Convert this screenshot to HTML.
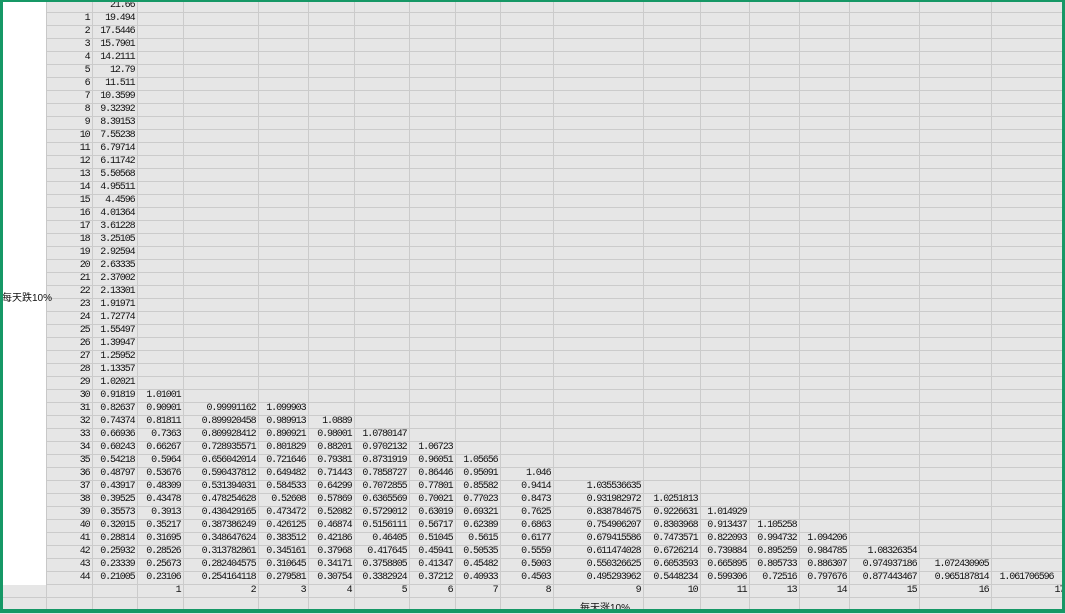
<!DOCTYPE html>
<html><head><meta charset="utf-8">
<style>
html,body{margin:0;padding:0;width:1065px;height:613px;overflow:hidden;background:#e6e6e6;}
table{position:absolute;left:0;top:0;border-collapse:collapse;table-layout:fixed;width:1080px;}
td{height:12px;padding:0 2px 0 0;border-right:1px solid #cbcbcb;border-bottom:1px solid #cbcbcb;text-align:right;white-space:nowrap;overflow:hidden;
font-family:"Liberation Mono","Noto Sans CJK SC",monospace;font-size:10px;letter-spacing:-1.1px;line-height:12px;color:#111;vertical-align:bottom;background:#e6e6e6;}
td.w{background:#fff;border-right:1px solid #c8c8c8;border-bottom:none;}
#frame{position:absolute;left:0;top:0;width:1065px;height:613px;box-sizing:border-box;border:2px solid #169866;border-left-width:3px;border-right-width:3px;border-bottom-width:4px;pointer-events:none;}
.lab{position:absolute;font-family:"Liberation Sans","Noto Sans CJK SC",sans-serif;font-size:10px;color:#111;white-space:nowrap;}
</style></head><body>
<table>
<colgroup><col style="width:46px"><col style="width:46px"><col style="width:45px"><col style="width:46px"><col style="width:75px"><col style="width:50px"><col style="width:46px"><col style="width:55px"><col style="width:46px"><col style="width:45px"><col style="width:53px"><col style="width:90px"><col style="width:57px"><col style="width:49px"><col style="width:50px"><col style="width:50px"><col style="width:70px"><col style="width:72px"><col style="width:89px"></colgroup>
<tr><td class="w"><td><td>21.66<td><td><td><td><td><td><td><td><td><td><td><td><td><td><td><td></tr>
<tr><td class="w"><td>1<td>19.494<td><td><td><td><td><td><td><td><td><td><td><td><td><td><td><td></tr>
<tr><td class="w"><td>2<td>17.5446<td><td><td><td><td><td><td><td><td><td><td><td><td><td><td><td></tr>
<tr><td class="w"><td>3<td>15.7901<td><td><td><td><td><td><td><td><td><td><td><td><td><td><td><td></tr>
<tr><td class="w"><td>4<td>14.2111<td><td><td><td><td><td><td><td><td><td><td><td><td><td><td><td></tr>
<tr><td class="w"><td>5<td>12.79<td><td><td><td><td><td><td><td><td><td><td><td><td><td><td><td></tr>
<tr><td class="w"><td>6<td>11.511<td><td><td><td><td><td><td><td><td><td><td><td><td><td><td><td></tr>
<tr><td class="w"><td>7<td>10.3599<td><td><td><td><td><td><td><td><td><td><td><td><td><td><td><td></tr>
<tr><td class="w"><td>8<td>9.32392<td><td><td><td><td><td><td><td><td><td><td><td><td><td><td><td></tr>
<tr><td class="w"><td>9<td>8.39153<td><td><td><td><td><td><td><td><td><td><td><td><td><td><td><td></tr>
<tr><td class="w"><td>10<td>7.55238<td><td><td><td><td><td><td><td><td><td><td><td><td><td><td><td></tr>
<tr><td class="w"><td>11<td>6.79714<td><td><td><td><td><td><td><td><td><td><td><td><td><td><td><td></tr>
<tr><td class="w"><td>12<td>6.11742<td><td><td><td><td><td><td><td><td><td><td><td><td><td><td><td></tr>
<tr><td class="w"><td>13<td>5.50568<td><td><td><td><td><td><td><td><td><td><td><td><td><td><td><td></tr>
<tr><td class="w"><td>14<td>4.95511<td><td><td><td><td><td><td><td><td><td><td><td><td><td><td><td></tr>
<tr><td class="w"><td>15<td>4.4596<td><td><td><td><td><td><td><td><td><td><td><td><td><td><td><td></tr>
<tr><td class="w"><td>16<td>4.01364<td><td><td><td><td><td><td><td><td><td><td><td><td><td><td><td></tr>
<tr><td class="w"><td>17<td>3.61228<td><td><td><td><td><td><td><td><td><td><td><td><td><td><td><td></tr>
<tr><td class="w"><td>18<td>3.25105<td><td><td><td><td><td><td><td><td><td><td><td><td><td><td><td></tr>
<tr><td class="w"><td>19<td>2.92594<td><td><td><td><td><td><td><td><td><td><td><td><td><td><td><td></tr>
<tr><td class="w"><td>20<td>2.63335<td><td><td><td><td><td><td><td><td><td><td><td><td><td><td><td></tr>
<tr><td class="w"><td>21<td>2.37002<td><td><td><td><td><td><td><td><td><td><td><td><td><td><td><td></tr>
<tr><td class="w"><td>22<td>2.13301<td><td><td><td><td><td><td><td><td><td><td><td><td><td><td><td></tr>
<tr><td class="w"><td>23<td>1.91971<td><td><td><td><td><td><td><td><td><td><td><td><td><td><td><td></tr>
<tr><td class="w"><td>24<td>1.72774<td><td><td><td><td><td><td><td><td><td><td><td><td><td><td><td></tr>
<tr><td class="w"><td>25<td>1.55497<td><td><td><td><td><td><td><td><td><td><td><td><td><td><td><td></tr>
<tr><td class="w"><td>26<td>1.39947<td><td><td><td><td><td><td><td><td><td><td><td><td><td><td><td></tr>
<tr><td class="w"><td>27<td>1.25952<td><td><td><td><td><td><td><td><td><td><td><td><td><td><td><td></tr>
<tr><td class="w"><td>28<td>1.13357<td><td><td><td><td><td><td><td><td><td><td><td><td><td><td><td></tr>
<tr><td class="w"><td>29<td>1.02021<td><td><td><td><td><td><td><td><td><td><td><td><td><td><td><td></tr>
<tr><td class="w"><td>30<td>0.91819<td>1.01001<td><td><td><td><td><td><td><td><td><td><td><td><td><td><td></tr>
<tr><td class="w"><td>31<td>0.82637<td>0.90901<td>0.99991162<td>1.099903<td><td><td><td><td><td><td><td><td><td><td><td><td></tr>
<tr><td class="w"><td>32<td>0.74374<td>0.81811<td>0.899920458<td>0.989913<td>1.0889<td><td><td><td><td><td><td><td><td><td><td><td></tr>
<tr><td class="w"><td>33<td>0.66936<td>0.7363<td>0.809928412<td>0.890921<td>0.98001<td>1.0780147<td><td><td><td><td><td><td><td><td><td><td></tr>
<tr><td class="w"><td>34<td>0.60243<td>0.66267<td>0.728935571<td>0.801829<td>0.88201<td>0.9702132<td>1.06723<td><td><td><td><td><td><td><td><td><td></tr>
<tr><td class="w"><td>35<td>0.54218<td>0.5964<td>0.656042014<td>0.721646<td>0.79381<td>0.8731919<td>0.96051<td>1.05656<td><td><td><td><td><td><td><td><td></tr>
<tr><td class="w"><td>36<td>0.48797<td>0.53676<td>0.590437812<td>0.649482<td>0.71443<td>0.7858727<td>0.86446<td>0.95091<td>1.046<td><td><td><td><td><td><td><td></tr>
<tr><td class="w"><td>37<td>0.43917<td>0.48309<td>0.531394031<td>0.584533<td>0.64299<td>0.7072855<td>0.77801<td>0.85582<td>0.9414<td>1.035536635<td><td><td><td><td><td><td></tr>
<tr><td class="w"><td>38<td>0.39525<td>0.43478<td>0.478254628<td>0.52608<td>0.57869<td>0.6365569<td>0.70021<td>0.77023<td>0.8473<td>0.931982972<td>1.0251813<td><td><td><td><td><td></tr>
<tr><td class="w"><td>39<td>0.35573<td>0.3913<td>0.430429165<td>0.473472<td>0.52082<td>0.5729012<td>0.63019<td>0.69321<td>0.7625<td>0.838784675<td>0.9226631<td>1.014929<td><td><td><td><td></tr>
<tr><td class="w"><td>40<td>0.32015<td>0.35217<td>0.387386249<td>0.426125<td>0.46874<td>0.5156111<td>0.56717<td>0.62389<td>0.6863<td>0.754906207<td>0.8303968<td>0.913437<td>1.105258<td><td><td><td></tr>
<tr><td class="w"><td>41<td>0.28814<td>0.31695<td>0.348647624<td>0.383512<td>0.42186<td>0.46405<td>0.51045<td>0.5615<td>0.6177<td>0.679415586<td>0.7473571<td>0.822093<td>0.994732<td>1.094206<td><td><td></tr>
<tr><td class="w"><td>42<td>0.25932<td>0.28526<td>0.313782861<td>0.345161<td>0.37968<td>0.417645<td>0.45941<td>0.50535<td>0.5559<td>0.611474028<td>0.6726214<td>0.739884<td>0.895259<td>0.984785<td>1.08326354<td><td></tr>
<tr><td class="w"><td>43<td>0.23339<td>0.25673<td>0.282404575<td>0.310645<td>0.34171<td>0.3758805<td>0.41347<td>0.45482<td>0.5003<td>0.550326625<td>0.6053593<td>0.665895<td>0.805733<td>0.886307<td>0.974937186<td>1.072430905<td></tr>
<tr><td class="w"><td>44<td>0.21005<td>0.23106<td>0.254164118<td>0.279581<td>0.30754<td>0.3382924<td>0.37212<td>0.40933<td>0.4503<td>0.495293962<td>0.5448234<td>0.599306<td>0.72516<td>0.797676<td>0.877443467<td>0.965187814<td style="text-align:left;padding-left:8px">1.061706596</tr>
<tr><td><td><td><td>1<td>2<td>3<td>4<td>5<td>6<td>7<td>8<td>9<td>10<td>11<td>13<td>14<td>15<td>16<td style="text-align:left;padding-left:63px">17</tr>
<tr><td><td><td><td><td><td><td><td><td><td><td><td><td><td><td><td><td><td><td></tr>
</table>
<div class="lab" style="left:2px;top:289px;">每天跌10%</div>
<div class="lab" style="left:580px;top:599px;">每天涨10%</div>
<div id="frame"></div>
</body></html>
